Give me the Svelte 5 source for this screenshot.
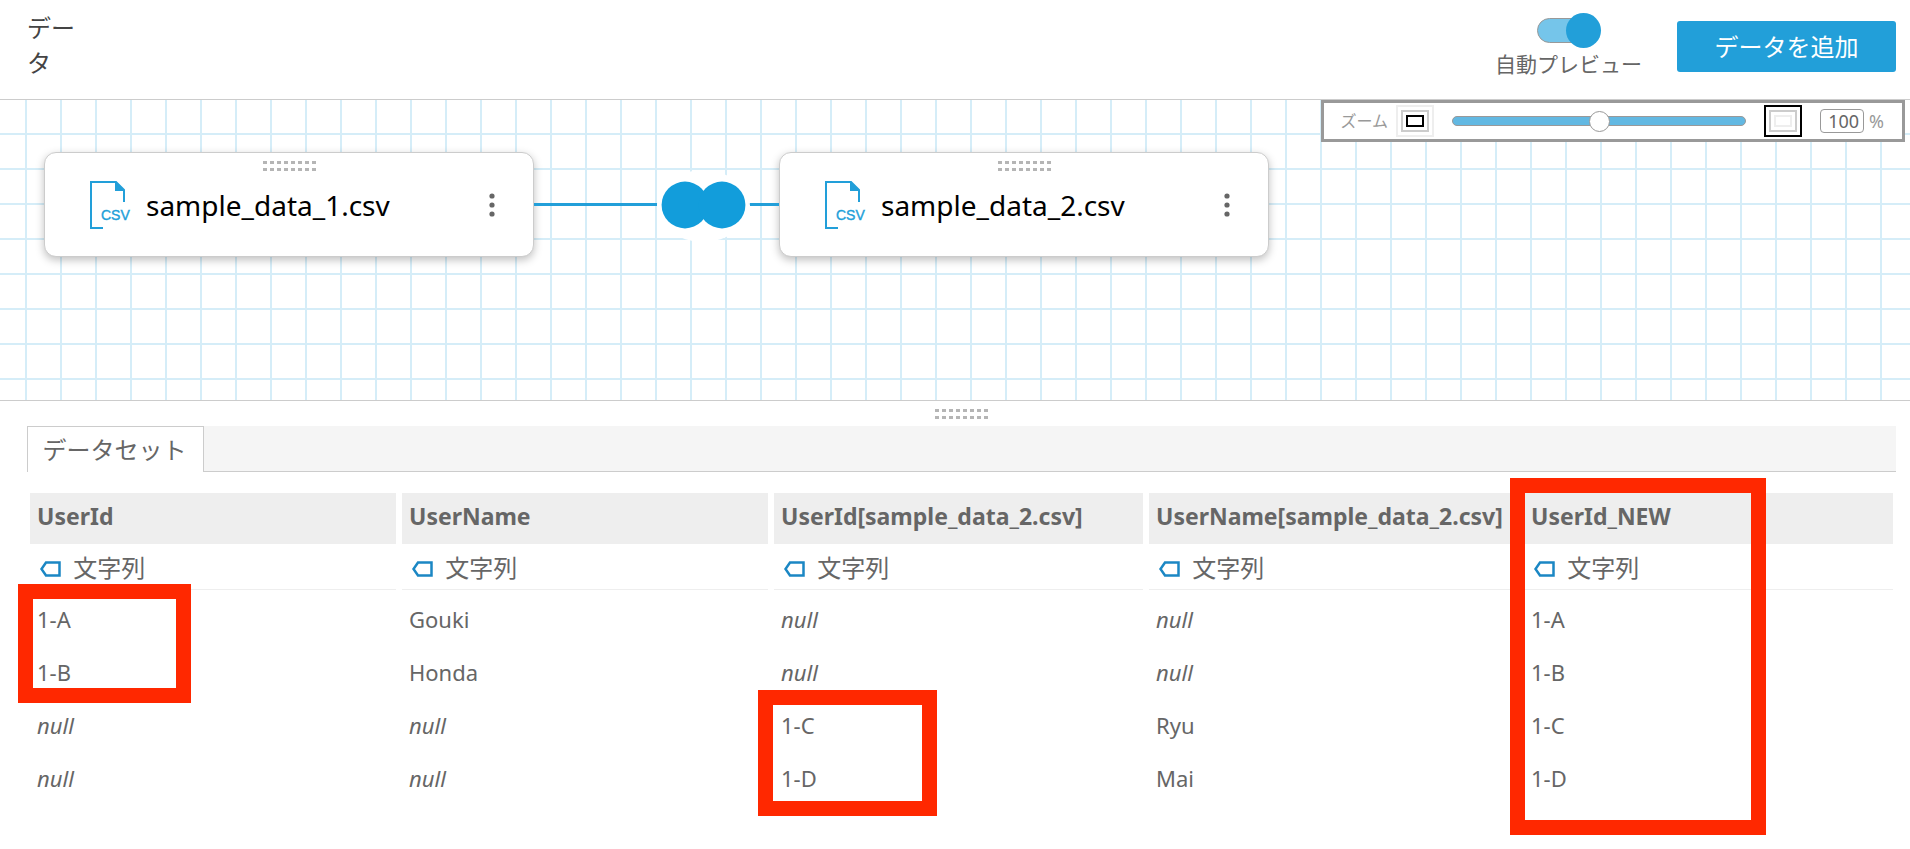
<script>
  // CANVAS NODES //
  let files = $state([
    { id: "first", name: "sample_data_1.csv" },
    { id: "second", name: "sample_data_2.csv" }
  ]);

  // PREVIEW TABLE //
  let columns = [
    "UserId",
    "UserName",
    "UserId[sample_data_2.csv]",
    "UserName[sample_data_2.csv]",
    "UserId_NEW"
  ];
  let rows = [
    ["1-A", "Gouki", null, null, "1-A"],
    ["1-B", "Honda", null, null, "1-B"],
    [null, null, "1-C", "Ryu", "1-C"],
    [null, null, "1-D", "Mai", "1-D"]
  ];

  let autoPreview = $state(true);
  let zoom = $state(100);
</script>

<svelte:head>
  <title>データ</title>
</svelte:head>

{#snippet grip()}
  <svg class="grip" width="53" height="10" viewBox="0 0 53 10" aria-hidden="true">
    {#each [0, 1, 2, 3, 4, 5, 6, 7] as i}
      <rect x={i * 7} y="0" width="4" height="3" />
      <rect x={i * 7} y="7" width="4" height="3" />
    {/each}
  </svg>
{/snippet}

<div class="page">
  <header>
    <h1>データ</h1>
    <div class="actions">
      <label class="toggle">
        <input type="checkbox" role="switch" bind:checked={autoPreview} />
        <span>自動プレビュー</span>
      </label>
      <button class="add">データを追加</button>
    </div>
  </header>

  <section class="canvas">
    {#each files as file}
      <div class="node {file.id}">
        {@render grip()}
        <div class="file">
          <svg width="42" height="50" viewBox="0 0 42 50" aria-hidden="true">
            <path d="M14 48H2V2H27L35 10V22" fill="none" stroke="#229fd9" stroke-width="2" />
            <path d="M26 1L36 11H26Z" fill="#229fd9" />
            <text x="12" y="40">CSV</text>
          </svg>
          <span class="name">{file.name}</span>
          <button class="more" aria-label="メニュー">
            <svg width="6" height="24" viewBox="0 0 6 24">
              <circle cx="3" cy="3" r="2.6" />
              <circle cx="3" cy="12" r="2.6" />
              <circle cx="3" cy="21" r="2.6" />
            </svg>
          </button>
        </div>
      </div>
    {/each}

    <!-- FULL JOIN BETWEEN THE TWO FILES -->
    <svg class="join" width="245" height="80" viewBox="0 0 245 80" aria-hidden="true">
      <ellipse cx="169" cy="41" rx="46" ry="36" fill="white" />
      <path d="M0 39.5H123M216 39.5H245" stroke="#229fd9" stroke-width="3" />
      <circle cx="151" cy="40" r="23.4" />
      <circle cx="188" cy="40" r="23.4" />
    </svg>

    <div class="zoom">
      <label for="zoom-range">ズーム</label>
      <button class="fit" aria-label="縮小"><span><i></i></span></button>
      <input id="zoom-range" class="range" type="range" min="0" max="200" bind:value={zoom} />
      <button class="fit large" aria-label="拡大"><span><i></i></span></button>
      <input class="percent" type="text" aria-label="ズーム率" bind:value={zoom} />
      <span class="unit">%</span>
    </div>
  </section>

  <section class="preview">
    <div class="resize">{@render grip()}</div>
    <div class="tabs" role="tablist">
      <button class="tab" role="tab" aria-selected="true">データセット</button>
    </div>

    <div class="data">
      <table>
        <thead>
          <tr>
            {#each columns as column}
              <th scope="col">{column}</th>
            {/each}
          </tr>
        </thead>
        <tbody>
          <tr class="types">
            {#each columns as column}
              <td>
                <svg width="21" height="16" viewBox="0 0 21 16" aria-hidden="true">
                  <path d="M6 1.5H19.5V14.5H6L1.5 8Z" />
                </svg>
                文字列
              </td>
            {/each}
          </tr>
          {#each rows as row}
            <tr>
              {#each row as value}
                <td class:empty={value === null}>{value ?? "null"}</td>
              {/each}
            </tr>
          {/each}
        </tbody>
      </table>
      <!-- HIGHLIGHTS -->
      <div class="mark users"></div>
      <div class="mark joined"></div>
      <div class="mark merged"></div>
    </div>
  </section>
</div>

<style>
  :global(body) {
    background: white;
  }

  .page {
    min-height: 100vh;
    font-family: "Noto Sans", "Noto Sans CJK JP", sans-serif;
    color: #666;
  }

  button,
  input {
    font-family: inherit;
    color: inherit;
    margin: 0;
    box-sizing: border-box;
  }

  header {
    display: flex;
    justify-content: space-between;
    height: 99px;
    box-sizing: border-box;
    padding: 10px 14px 0 27px;
  }

  h1 {
    width: 48px;
    margin: 0;
    font-size: 24px;
    font-weight: 400;
    line-height: 35px;
    color: #444;
  }

  .actions {
    display: flex;
    align-items: flex-start;
    gap: 35px;
  }

  .toggle {
    display: flex;
    flex-direction: column;
    align-items: center;
    padding-top: 3px;
    font-size: 21px;
    line-height: 32px;
  }

  .toggle input {
    appearance: none;
    position: relative;
    display: flex;
    align-items: center;
    width: 64px;
    height: 35px;
  }

  .toggle input::before {
    content: "";
    width: 56px;
    height: 23px;
    border: 1px solid #999;
    border-radius: 13px;
    background: #75c5ea;
  }

  .toggle input::after {
    content: "";
    position: absolute;
    right: 0;
    width: 35px;
    height: 35px;
    border-radius: 50%;
    background: #229fd9;
  }

  .add {
    width: 219px;
    height: 51px;
    margin-top: 11px;
    padding: 0 0 3px;
    border: none;
    border-radius: 3px;
    background: #229fd9;
    color: white;
    font-size: 24px;
  }

  .canvas {
    position: relative;
    height: 300px;
    border-top: 1px solid #ccc;
    border-bottom: 1px solid #ccc;
    background:
      linear-gradient(90deg, #d5edf8 2px, transparent 2px) 25px 0 / 35px 35px,
      linear-gradient(#d5edf8 2px, transparent 2px) 0 33px / 35px 35px;
  }

  .grip {
    display: block;
    fill: #b5b5b5;
  }

  .node {
    position: absolute;
    top: 52px;
    width: 490px;
    height: 105px;
    box-sizing: border-box;
    padding: 8px 38px 0;
    border: 1px solid #ccc;
    border-radius: 12px;
    background: white;
    box-shadow: 0 3px 8px rgba(0, 0, 0, 0.25);
  }

  .node .grip {
    margin: 0 auto;
  }

  .first {
    left: 44px;
  }

  .second {
    left: 779px;
  }

  .file {
    display: flex;
    align-items: center;
    height: 50px;
    margin-top: 9px;
    padding-left: 6px;
  }

  .file text {
    font: 14px "Liberation Sans", sans-serif;
    fill: #229fd9;
    stroke: #229fd9;
    stroke-width: 0.4;
  }

  .name {
    flex: 1;
    margin-left: 15px;
    font-size: 28px;
    color: black;
  }

  .more {
    display: flex;
    padding: 0;
    border: none;
    background: none;
    fill: #666;
  }

  .join {
    position: absolute;
    top: 65px;
    left: 534px;
    fill: #129ddb;
  }

  .zoom {
    position: absolute;
    top: 0;
    right: 5px;
    display: flex;
    align-items: center;
    height: 42px;
    box-sizing: border-box;
    padding: 0 18px 0 17px;
    border: 3px solid #999;
    background: white;
    font-size: 16px;
    color: #999;
  }

  .zoom label {
    padding-bottom: 2px;
  }

  .fit {
    display: flex;
    width: 38px;
    height: 32px;
    margin-left: 8px;
    padding: 3px;
    border: 2px solid #eee;
    background: white;
  }

  .fit span {
    display: flex;
    flex: 1;
    padding: 3px;
    border: 2px solid #ccc;
  }

  .fit i {
    flex: 1;
    border: 2px solid black;
  }

  .large {
    border-color: black;
  }

  .large i {
    border-color: #eee;
  }

  .range {
    appearance: none;
    width: 294px;
    height: 10px;
    margin: 0 10px 0 18px;
    border: 1px solid #999;
    border-radius: 5px;
    background: #62b8e2;
  }

  .range::-webkit-slider-thumb {
    appearance: none;
    width: 21px;
    height: 21px;
    border: 1px solid #999;
    border-radius: 50%;
    background: white;
  }

  .percent {
    width: 44px;
    height: 24px;
    margin: 0 5px 0 18px;
    padding: 0 4px;
    border: 1px solid #999;
    border-radius: 4px;
    font-size: 18px;
    text-align: right;
    color: #666;
  }

  .unit {
    font-size: 18px;
  }

  .preview {
    padding: 8px 14px 0 27px;
  }

  .resize {
    display: flex;
    justify-content: center;
    height: 17px;
  }

  .tabs {
    display: flex;
    height: 46px;
    box-sizing: border-box;
    border-bottom: 1px solid #ccc;
    background: #f5f5f5;
  }

  .tab {
    width: 177px;
    height: 46px;
    padding: 0 2px 3px 0;
    border: 1px solid #ccc;
    border-bottom: none;
    background: white;
    font-size: 24px;
  }

  .data {
    position: relative;
    margin: 0 -3px;
    padding-top: 21px;
  }

  table {
    width: 100%;
    table-layout: fixed;
    border-collapse: separate;
    border-spacing: 6px 0;
    font-size: 22px;
  }

  th,
  td {
    height: 53px;
    box-sizing: border-box;
    padding: 4px 7px 0;
    text-align: left;
    white-space: nowrap;
  }

  th {
    height: 51px;
    padding: 0 7px 5px;
    background: #eee;
    font-size: 23px;
  }

  th:nth-child(-n + 2) {
    width: 366px;
  }

  .types td {
    height: 46px;
    padding: 0 10px;
    border-bottom: 1px solid #eee;
    font-size: 24px;
  }

  .types svg {
    margin-right: 6px;
    fill: none;
    stroke: #1b87c4;
    stroke-width: 2.5;
  }

  .empty {
    font-style: italic;
  }

  .mark {
    position: absolute;
    box-sizing: border-box;
    border: 15px solid #ff2800;
  }

  .users {
    top: 112px;
    left: -6px;
    width: 173px;
    height: 119px;
  }

  .joined {
    top: 218px;
    left: 734px;
    width: 179px;
    height: 126px;
  }

  .merged {
    top: 6px;
    right: 133px;
    width: 256px;
    height: 357px;
  }
</style>
